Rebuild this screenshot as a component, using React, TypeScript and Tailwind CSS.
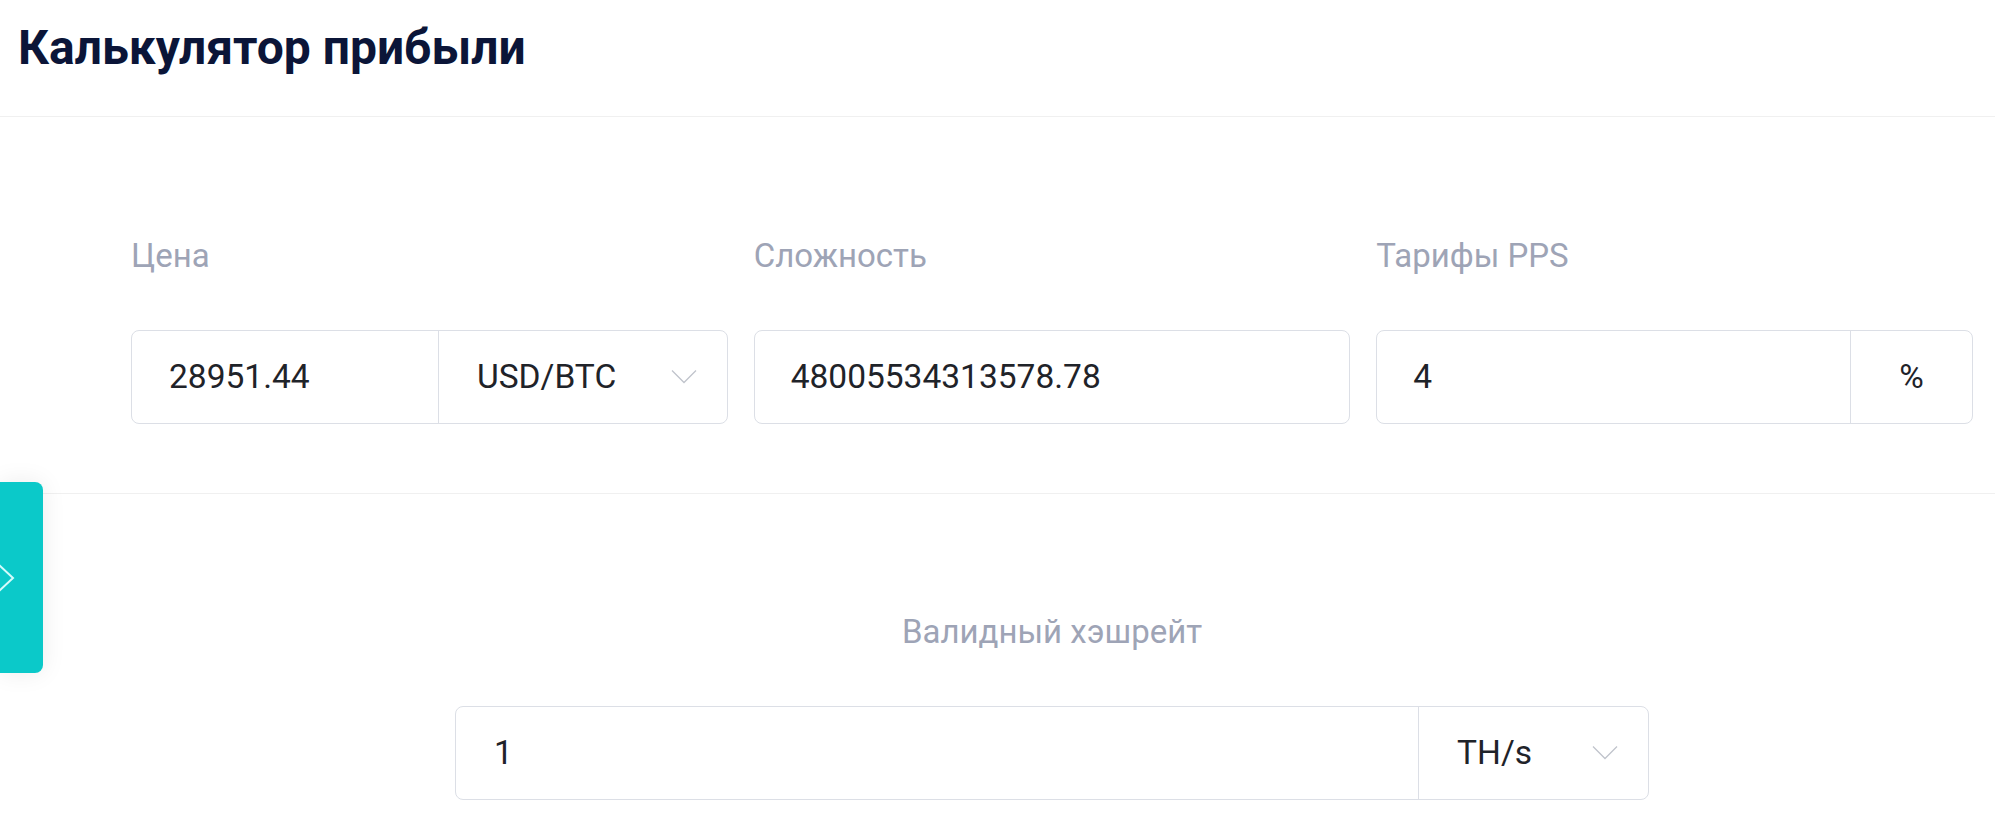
import React from "react";

const Chevron = () => (
  <svg width="26" height="16" viewBox="0 0 26 16" fill="none" className="shrink-0">
    <polyline points="1,1.5 13,13.5 25,1.5" stroke="#c0c4cc" strokeWidth="1.3" fill="none" />
  </svg>
);

export default function App() {
  return (
    <div
      className="relative w-[1995px] h-[836px] overflow-hidden bg-white"
      style={{ fontFamily: "Roboto, 'Noto Sans', sans-serif" }}
    >
      <header className="h-[117px] border-b border-[#f0f0f0] pl-[18px] pt-[24px]">
        <h1 className="text-[48px] leading-none font-bold text-[#0b1538]">Калькулятор прибыли</h1>
      </header>

      <section className="border-b border-[#f0f0f0] pl-[131px] pr-[22px] pt-[122px] pb-[69px]">
        <div className="grid grid-cols-3 gap-x-[26px]">
          <div className="flex flex-col">
            <label className="text-[33px] leading-none text-[#9ea4b6] h-[33px]">Цена</label>
            <div className="mt-[58px] flex h-[94px] rounded-[8px] border border-[#dcdfe6] text-[33.5px] text-[#1f2329]">
              <div className="flex items-center w-[307px] pl-[37px] border-r border-[#dcdfe6]">28951.44</div>
              <div className="flex flex-1 items-center justify-between pl-[38px] pr-[30px]">
                <span>USD/BTC</span>
                <Chevron />
              </div>
            </div>
          </div>
          <div className="flex flex-col">
            <label className="text-[33px] leading-none text-[#9ea4b6] h-[33px]">Сложность</label>
            <div className="mt-[58px] flex items-center h-[94px] rounded-[8px] border border-[#dcdfe6] pl-[36px] text-[33.5px] text-[#1f2329]">
              48005534313578.78
            </div>
          </div>
          <div className="flex flex-col">
            <label className="text-[33px] leading-none text-[#9ea4b6] h-[33px]">Тарифы PPS</label>
            <div className="mt-[58px] flex h-[94px] rounded-[8px] border border-[#dcdfe6] text-[33.5px] text-[#1f2329]">
              <div className="flex flex-1 items-center pl-[36px] border-r border-[#dcdfe6]">4</div>
              <div className="flex w-[121px] items-center justify-center">%</div>
            </div>
          </div>
        </div>
      </section>

      <section className="pl-[131px] pr-[22px] pt-[121px]">
        <div className="flex flex-col items-center">
          <label className="text-[33px] leading-none text-[#9ea4b6] h-[33px]">Валидный хэшрейт</label>
          <div className="mt-[58px] flex w-[1194px] h-[94px] rounded-[8px] border border-[#dcdfe6] text-[33.5px] text-[#1f2329]">
            <div className="flex flex-1 items-center pl-[38px] border-r border-[#dcdfe6]">1</div>
            <div className="flex w-[229px] items-center justify-between pl-[38px] pr-[30px]">
              <span>TH/s</span>
              <Chevron />
            </div>
          </div>
        </div>
      </section>

      <div className="absolute left-0 top-[482px] w-[43px] h-[191px] rounded-r-[8px] bg-[#0bc9c9] shadow-[0_0_24px_rgba(0,0,0,0.08)] flex items-center">
        <svg width="18" height="32" viewBox="0 0 18 32" fill="none" className="-ml-[3px]">
          <polyline points="1,2 16,16 1,30" stroke="#d4fbfb" strokeWidth="2" fill="none" />
        </svg>
      </div>
    </div>
  );
}
